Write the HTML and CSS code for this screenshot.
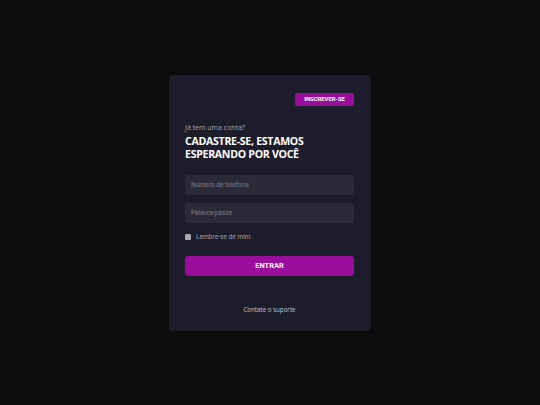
FILE: index.html
```html
<!DOCTYPE html>
<html lang="pt">
<head>
<meta charset="utf-8">
<link rel="stylesheet" href="styles.css">
</head>
<body>
<div class="card">
  <div class="top">
    <button class="signup">INSCREVER-SE</button>
  </div>
  <p class="sub">Já tem uma conta?</p>
  <h1 class="title">CADASTRE-SE, ESTAMOS<br>ESPERANDO POR VOCÊ</h1>
  <div class="field">Número de telefone</div>
  <div class="field second">Palavra-passe</div>
  <label class="remember"><span class="box"></span>Lembre-se de mim</label>
  <button class="enter">ENTRAR</button>
  <p class="support">Contate o suporte</p>
</div>
</body>
</html>
```
FILE: styles.css
```css
html, body {
  margin: 0;
  height: 100%;
}
body {
  background: #0e0e10;
  display: flex;
  align-items: center;
  justify-content: center;
  font-family: "Open Sans", sans-serif;
}
.card {
  width: 202px;
  height: 256px;
  box-sizing: border-box;
  padding: 18px 17px 0 16px;
  background: #1d1c2a;
  border-radius: 4px;
  display: flex;
  flex-direction: column;
  box-shadow: 0 0 6px rgba(0,0,0,0.5);
}
.top {
  display: flex;
  justify-content: flex-end;
}
.signup {
  width: 59px;
  height: 13px;
  padding: 0;
  border: none;
  border-radius: 2px;
  background: #9a0c9c;
  color: #fff;
  font-family: "Roboto", sans-serif;
  font-weight: 700;
  font-size: 5.9px;
}
.sub {
  margin: 17px 0 0;
  font-size: 7px;
  line-height: 10px;
  color: #a9a9b2;
}
.title {
  margin: 2px 0 0;
  font-size: 10.6px;
  line-height: 13px;
  font-weight: 700;
  letter-spacing: -0.3px;
  color: #fff;
}
.field {
  margin-top: 14px;
  height: 20px;
  border-radius: 3px;
  background: #2a2a38;
  color: #7d7d88;
  font-family: "Roboto", sans-serif;
  font-size: 6.6px;
  line-height: 20px;
  padding-left: 6px;
}
.field.second {
  margin-top: 8px;
}
.remember {
  margin-top: 9px;
  height: 10px;
  display: flex;
  align-items: center;
  font-family: "Roboto", sans-serif;
  font-size: 6.6px;
  color: #a2a2ac;
}
.box {
  width: 6px;
  height: 6px;
  border-radius: 1px;
  background: #a9a9b0;
  margin-right: 5px;
}
.enter {
  margin-top: 14px;
  height: 20px;
  padding: 0;
  border: none;
  border-radius: 3px;
  background: #9a0c9c;
  color: #fff;
  font-family: "Roboto", sans-serif;
  font-weight: 700;
  font-size: 7.4px;
}
.support {
  margin: 29px 0 0;
  text-align: center;
  font-size: 6.2px;
  line-height: 10px;
  color: #c4c4cc;
}
```
